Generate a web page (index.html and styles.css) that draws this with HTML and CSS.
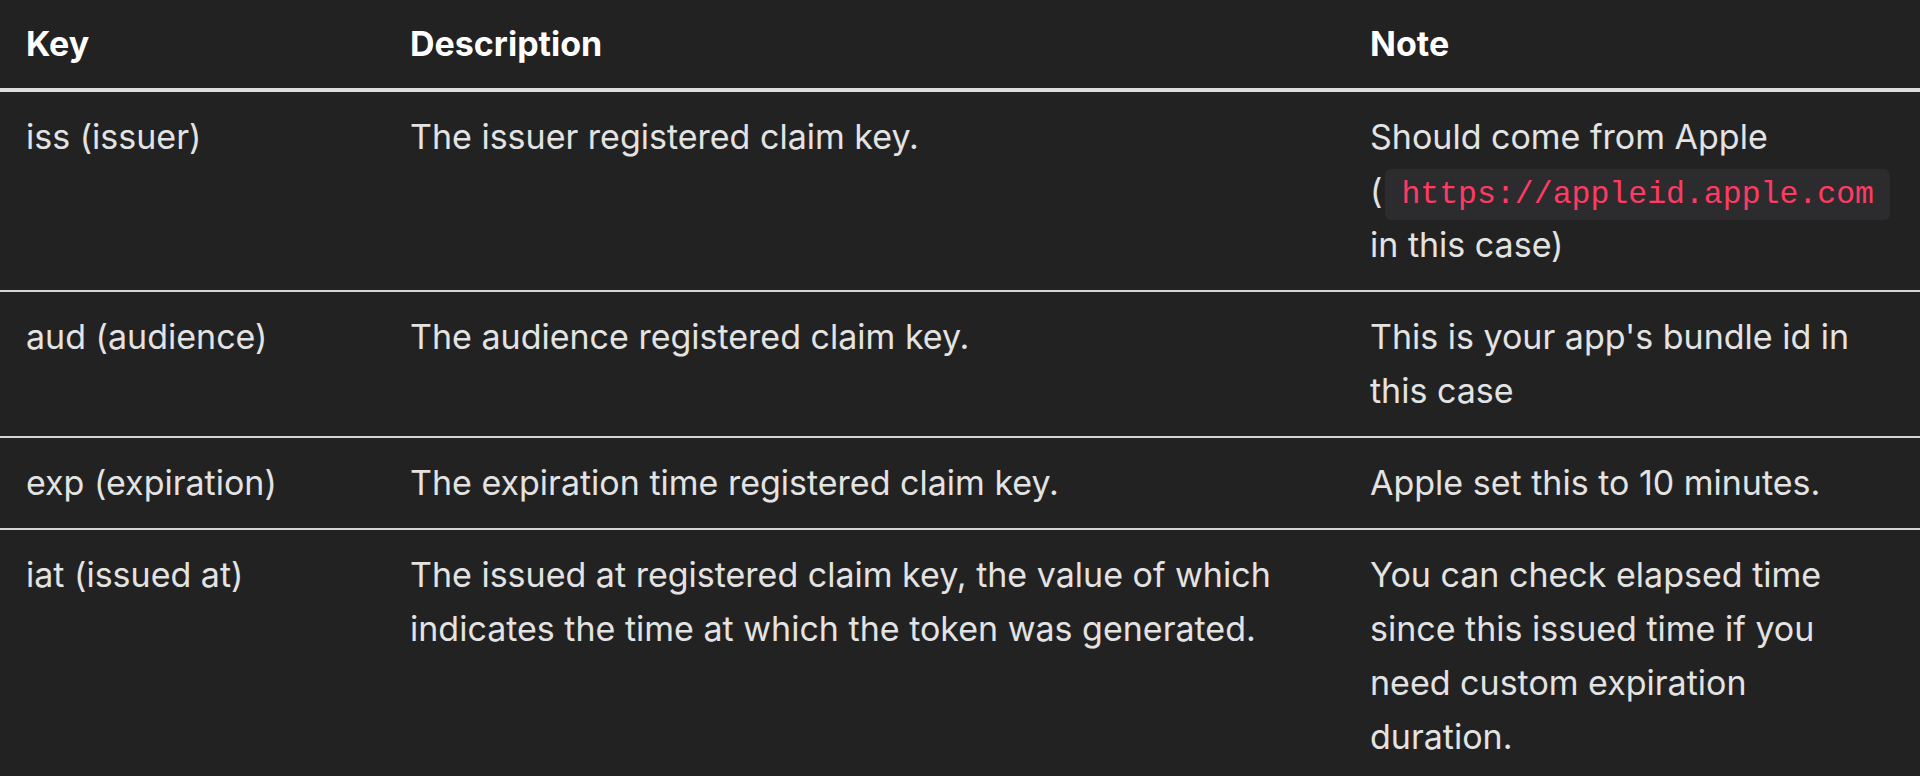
FILE: index.html
```html
<!DOCTYPE html>
<html lang="en">
<head>
<meta charset="utf-8">
<title>Claims</title>
<link rel="stylesheet" href="styles.css">
</head>
<body>
<table class="claims">
  <colgroup>
    <col class="c-key">
    <col class="c-desc">
    <col class="c-note">
  </colgroup>
  <thead>
    <tr><th>Key</th><th>Description</th><th>Note</th></tr>
  </thead>
  <tbody>
    <tr>
      <td>iss (issuer)</td>
      <td>The issuer registered claim key.</td>
      <td>Should come from Apple (<code>https://appleid.apple.com</code> in this case)</td>
    </tr>
    <tr>
      <td>aud (audience)</td>
      <td>The audience registered claim key.</td>
      <td>This is your app's bundle id in this case</td>
    </tr>
    <tr>
      <td>exp (expiration)</td>
      <td>The expiration time registered claim key.</td>
      <td>Apple set this to 10 minutes.</td>
    </tr>
    <tr>
      <td>iat (issued at)</td>
      <td>The issued at registered claim key, the value of which indicates the time at which the token was generated.</td>
      <td>You can check elapsed time since this issued time if you need custom expiration duration.</td>
    </tr>
  </tbody>
</table>
</body>
</html>
```
FILE: styles.css
```css
html, body {
  margin: 0;
  padding: 0;
  background: #222222;
}
body {
  font-family: "Inter", "Roboto", sans-serif;
  font-size: 34px;
  line-height: 54px;
  color: #e3e3e3;
  overflow: hidden;
}
.claims {
  width: 1920px;
  table-layout: fixed;
  border-collapse: collapse;
}
.c-key { width: 384px; }
.c-desc { width: 960px; }
.c-note { width: 576px; }
.claims th {
  text-align: left;
  font-weight: 700;
  color: #ffffff;
  padding: 17px 26px;
  border-bottom: 4px solid #dedede;
}
.claims td {
  vertical-align: top;
  padding: 18px 26px;
  border-bottom: 2px solid #d6d6d6;
}
.claims code {
  font-family: "Liberation Mono", "Courier New", monospace;
  font-size: 31.5px;
  line-height: 1;
  color: #ff3b63;
  background: #2c2c2e;
  border-radius: 6px;
  padding: 8px 16px;
  margin-left: 3px;
}
```
